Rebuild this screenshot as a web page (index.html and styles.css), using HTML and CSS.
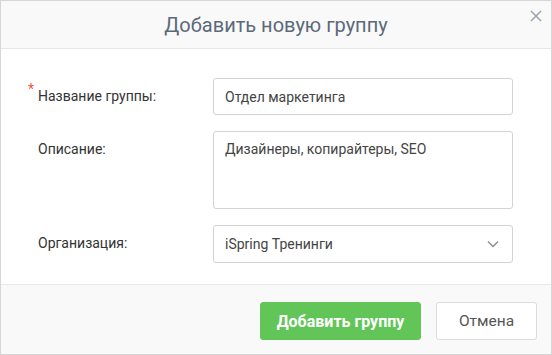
FILE: index.html
```html
<!DOCTYPE html>
<html>
<head>
    <title>Добавить новую группу</title>
    <link rel="stylesheet" href="styles.css">
</head>
<body>
    <div class="dialog">
        <div class="dialog-header">
            <h1 class="dialog-title">Добавить новую группу</h1>
            <button class="close-btn" aria-label="Закрыть">
                <svg width="12" height="12" viewBox="0 0 12 12"><path d="M1 1L11 11M11 1L1 11" stroke="#9aa6b3" stroke-width="1.6" fill="none"/></svg>
            </button>
        </div>
        <div class="dialog-body">
            <div class="form-row">
                <label class="form-label required">Название группы:</label>
                <div class="field">Отдел маркетинга</div>
            </div>
            <div class="form-row">
                <label class="form-label">Описание:</label>
                <div class="field field-area">Дизайнеры, копирайтеры, SEO</div>
            </div>
            <div class="form-row">
                <label class="form-label">Организация:</label>
                <div class="field field-select">
                    <span>iSpring Тренинги</span>
                    <svg width="12" height="8" viewBox="0 0 12 8"><path d="M1 1.5L6 6.5L11 1.5" stroke="#8a8f96" stroke-width="1.5" fill="none"/></svg>
                </div>
            </div>
        </div>
        <div class="dialog-footer">
            <button class="btn btn-primary">Добавить группу</button>
            <button class="btn btn-default">Отмена</button>
        </div>
    </div>
</body>
</html>
```
FILE: styles.css
```css
body { margin: 0; font-family: Roboto, "Liberation Sans", sans-serif; background: #fff; }
.dialog { width: 552px; height: 355px; box-sizing: border-box; border: 1px solid #d6d6d6; display: flex; flex-direction: column; }
.dialog-header { height: 47px; background: #f9f9f9; border-bottom: 1px solid #e6e6e6; display: flex; align-items: center; justify-content: center; position: relative; }
.dialog-title { margin: 0; font-size: 20px; font-weight: 400; color: #5b6a79; }
.close-btn { position: absolute; right: 7px; top: 7px; border: 0; background: none; padding: 0; width: 16px; height: 16px; display: flex; align-items: center; justify-content: center; }
.dialog-body { padding: 29px 39px 21px 37px; display: flex; flex-direction: column; gap: 16px; border-bottom: 1px solid #e9e9e9; }
.form-row { display: grid; grid-template-columns: 175px 300px; align-items: start; }
.form-label { font-size: 14px; color: #333; line-height: 37px; position: relative; }
.required::before { content: "*"; color: #e9573f; position: absolute; left: -10px; top: -7px; font-size: 14px; }
.field { box-sizing: border-box; height: 37px; border: 1px solid #d3d3d3; border-radius: 3px; padding: 0 11px; font-size: 14px; color: #444; display: flex; align-items: center; }
.field-area { height: 78px; align-items: flex-start; padding-top: 9px; }
.field-select { height: 38px; justify-content: space-between; padding-right: 13px; }
.dialog-footer { flex: 1; background: #f9f9f9; display: flex; justify-content: flex-end; align-items: flex-start; padding: 17px 14px 0 0; gap: 15px; }
.btn { height: 38px; border-radius: 3px; font-family: Roboto, "Liberation Sans", sans-serif; font-size: 16px; padding: 0 10px; cursor: pointer; }
.btn-primary { background: #62c558; border: 1px solid #62c558; color: #fff; font-weight: 700; width: 161px; }
.btn-default { background: #fff; border: 1px solid #dcdcdc; color: #555; width: 101px; font-size: 15.5px; }
```
